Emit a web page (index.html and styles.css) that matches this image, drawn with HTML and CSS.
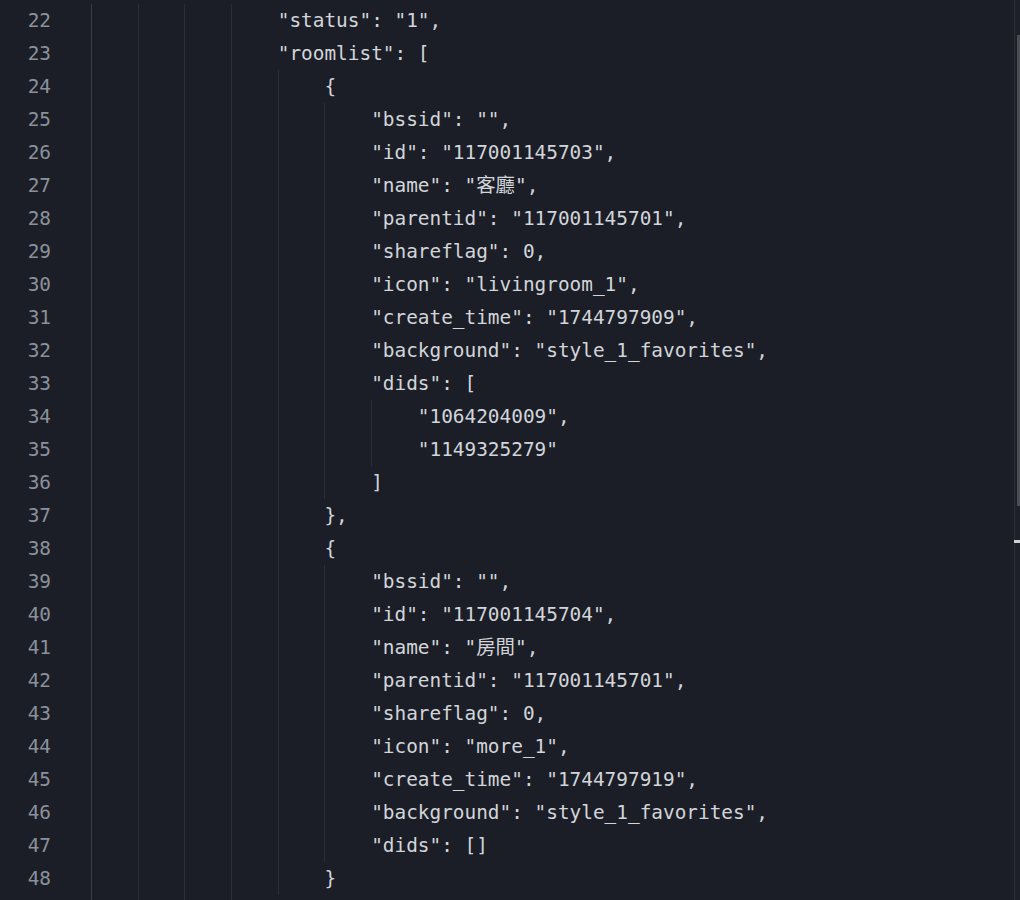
FILE: index.html
```html
<!DOCTYPE html>
<html lang="en">
<head>
<meta charset="utf-8">
<title>JSON editor</title>
<link rel="stylesheet" href="styles.css">
</head>
<body>
<div class="editor">
  <div class="lines">
    <div class="line"><span class="ln">22</span><span class="code"><span class="ind"></span><span class="ind"></span><span class="ind"></span><span class="ind"></span><span class="tx">"status": "1",</span></span></div>
    <div class="line"><span class="ln">23</span><span class="code"><span class="ind"></span><span class="ind"></span><span class="ind"></span><span class="ind"></span><span class="tx">"roomlist": [</span></span></div>
    <div class="line"><span class="ln">24</span><span class="code"><span class="ind"></span><span class="ind"></span><span class="ind"></span><span class="ind"></span><span class="ind"></span><span class="tx">{</span></span></div>
    <div class="line"><span class="ln">25</span><span class="code"><span class="ind"></span><span class="ind"></span><span class="ind"></span><span class="ind"></span><span class="ind"></span><span class="ind"></span><span class="tx">"bssid": "",</span></span></div>
    <div class="line"><span class="ln">26</span><span class="code"><span class="ind"></span><span class="ind"></span><span class="ind"></span><span class="ind"></span><span class="ind"></span><span class="ind"></span><span class="tx">"id": "117001145703",</span></span></div>
    <div class="line"><span class="ln">27</span><span class="code"><span class="ind"></span><span class="ind"></span><span class="ind"></span><span class="ind"></span><span class="ind"></span><span class="ind"></span><span class="tx">"name": "客廳",</span></span></div>
    <div class="line"><span class="ln">28</span><span class="code"><span class="ind"></span><span class="ind"></span><span class="ind"></span><span class="ind"></span><span class="ind"></span><span class="ind"></span><span class="tx">"parentid": "117001145701",</span></span></div>
    <div class="line"><span class="ln">29</span><span class="code"><span class="ind"></span><span class="ind"></span><span class="ind"></span><span class="ind"></span><span class="ind"></span><span class="ind"></span><span class="tx">"shareflag": 0,</span></span></div>
    <div class="line"><span class="ln">30</span><span class="code"><span class="ind"></span><span class="ind"></span><span class="ind"></span><span class="ind"></span><span class="ind"></span><span class="ind"></span><span class="tx">"icon": "livingroom_1",</span></span></div>
    <div class="line"><span class="ln">31</span><span class="code"><span class="ind"></span><span class="ind"></span><span class="ind"></span><span class="ind"></span><span class="ind"></span><span class="ind"></span><span class="tx">"create_time": "1744797909",</span></span></div>
    <div class="line"><span class="ln">32</span><span class="code"><span class="ind"></span><span class="ind"></span><span class="ind"></span><span class="ind"></span><span class="ind"></span><span class="ind"></span><span class="tx">"background": "style_1_favorites",</span></span></div>
    <div class="line"><span class="ln">33</span><span class="code"><span class="ind"></span><span class="ind"></span><span class="ind"></span><span class="ind"></span><span class="ind"></span><span class="ind"></span><span class="tx">"dids": [</span></span></div>
    <div class="line"><span class="ln">34</span><span class="code"><span class="ind"></span><span class="ind"></span><span class="ind"></span><span class="ind"></span><span class="ind"></span><span class="ind"></span><span class="ind"></span><span class="tx">"1064204009",</span></span></div>
    <div class="line"><span class="ln">35</span><span class="code"><span class="ind"></span><span class="ind"></span><span class="ind"></span><span class="ind"></span><span class="ind"></span><span class="ind"></span><span class="ind"></span><span class="tx">"1149325279"</span></span></div>
    <div class="line"><span class="ln">36</span><span class="code"><span class="ind"></span><span class="ind"></span><span class="ind"></span><span class="ind"></span><span class="ind"></span><span class="ind"></span><span class="tx">]</span></span></div>
    <div class="line"><span class="ln">37</span><span class="code"><span class="ind"></span><span class="ind"></span><span class="ind"></span><span class="ind"></span><span class="ind"></span><span class="tx">},</span></span></div>
    <div class="line"><span class="ln">38</span><span class="code"><span class="ind"></span><span class="ind"></span><span class="ind"></span><span class="ind"></span><span class="ind"></span><span class="tx">{</span></span></div>
    <div class="line"><span class="ln">39</span><span class="code"><span class="ind"></span><span class="ind"></span><span class="ind"></span><span class="ind"></span><span class="ind"></span><span class="ind"></span><span class="tx">"bssid": "",</span></span></div>
    <div class="line"><span class="ln">40</span><span class="code"><span class="ind"></span><span class="ind"></span><span class="ind"></span><span class="ind"></span><span class="ind"></span><span class="ind"></span><span class="tx">"id": "117001145704",</span></span></div>
    <div class="line"><span class="ln">41</span><span class="code"><span class="ind"></span><span class="ind"></span><span class="ind"></span><span class="ind"></span><span class="ind"></span><span class="ind"></span><span class="tx">"name": "房間",</span></span></div>
    <div class="line"><span class="ln">42</span><span class="code"><span class="ind"></span><span class="ind"></span><span class="ind"></span><span class="ind"></span><span class="ind"></span><span class="ind"></span><span class="tx">"parentid": "117001145701",</span></span></div>
    <div class="line"><span class="ln">43</span><span class="code"><span class="ind"></span><span class="ind"></span><span class="ind"></span><span class="ind"></span><span class="ind"></span><span class="ind"></span><span class="tx">"shareflag": 0,</span></span></div>
    <div class="line"><span class="ln">44</span><span class="code"><span class="ind"></span><span class="ind"></span><span class="ind"></span><span class="ind"></span><span class="ind"></span><span class="ind"></span><span class="tx">"icon": "more_1",</span></span></div>
    <div class="line"><span class="ln">45</span><span class="code"><span class="ind"></span><span class="ind"></span><span class="ind"></span><span class="ind"></span><span class="ind"></span><span class="ind"></span><span class="tx">"create_time": "1744797919",</span></span></div>
    <div class="line"><span class="ln">46</span><span class="code"><span class="ind"></span><span class="ind"></span><span class="ind"></span><span class="ind"></span><span class="ind"></span><span class="ind"></span><span class="tx">"background": "style_1_favorites",</span></span></div>
    <div class="line"><span class="ln">47</span><span class="code"><span class="ind"></span><span class="ind"></span><span class="ind"></span><span class="ind"></span><span class="ind"></span><span class="ind"></span><span class="tx">"dids": []</span></span></div>
    <div class="line"><span class="ln">48</span><span class="code"><span class="ind"></span><span class="ind"></span><span class="ind"></span><span class="ind"></span><span class="ind"></span><span class="tx">}</span></span></div>
    <div class="line"><span class="ln"></span><span class="code"><span class="ind"></span><span class="ind"></span><span class="ind"></span><span class="ind"></span></span></div>
  </div>
  <div class="scrollbar">
    <div class="thumb"></div>
    <div class="marker"></div>
  </div>
</div>
</body>
</html>
```

FILE: styles.css
```css
* { box-sizing: border-box; }

html, body {
  margin: 0;
  padding: 0;
  background: #1b1e26;
}

.editor {
  display: flex;
  width: 1020px;
  height: 900px;
  overflow: hidden;
  background: #1b1e26;
  font-family: "DejaVu Sans Mono", "Noto Sans CJK TC", monospace;
  font-size: 19.4px;
  color: #d2d5da;
}

.lines {
  flex: 1;
  padding-top: 3.5px;
  overflow: hidden;
}

.line {
  display: flex;
  height: 33px;
  line-height: 33px;
}

.ln {
  flex: none;
  width: 91px;
  padding-right: 40px;
  text-align: right;
  color: #8b919b;
}

.code {
  display: flex;
  flex: 1;
}

.ind {
  flex: none;
  width: 46.7px;
  height: 33px;
  border-left: 1px solid #2b2e37;
}

.ind:first-child {
  border-left-color: #393c45;
}

.tx {
  white-space: pre;
}

.scrollbar {
  position: relative;
  flex: none;
  width: 6px;
  height: 900px;
  border-left: 1px solid #2c2f38;
  background: #1d2028;
}

.thumb {
  margin-top: 35px;
  margin-left: 2px;
  width: 3px;
  height: 471px;
  background: #4a4d54;
}

.marker {
  position: absolute;
  left: -1px;
  top: 540px;
  width: 6px;
  height: 3px;
  background: #cfd0d2;
}
```
